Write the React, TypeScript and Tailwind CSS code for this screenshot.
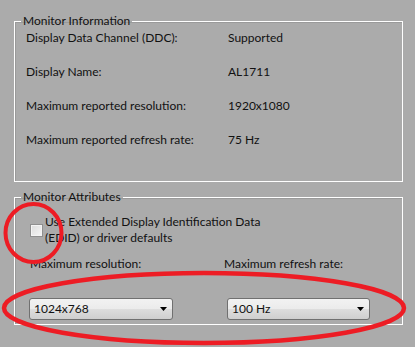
const font = { fontFamily: 'Lato, "Noto Sans", sans-serif' };

function Dropdown({ value, className }: { value: string; className?: string }) {
    return (
        <div className={`h-[22px] flex items-center justify-between rounded-[3px] border border-[#707070] bg-[linear-gradient(#f2f2f2_0%,#ebebeb_50%,#dddddd_51%,#cfcfcf_100%)] pl-[4px] pr-[5px] ${className ?? ''}`}>
            <span className="text-[12px] leading-[16px] text-[#111]">{value}</span>
            <svg width="7" height="4" viewBox="0 0 7 4"><path d="M0 0h7L3.5 4z" fill="#000" /></svg>
        </div>
    );
}

function InfoRow({ label, value }: { label: string; value: string }) {
    return (
        <div className="grid grid-cols-[202px_1fr] leading-[16px]">
            <span>{label}</span>
            <span>{value}</span>
        </div>
    );
}

export default function App() {
    return (
        <div className="relative w-[415px] h-[347px] overflow-hidden bg-[#ababab] pt-[13px] text-[12px] text-[#111]" style={font}>
            <fieldset className="ml-[14px] w-[389px] border border-white px-0 pb-[33px] shadow-[inset_1px_1px_0_#9a9a9a]">
                <legend className="ml-[6px] px-[2px] leading-[16px]">Monitor Information</legend>
                <div className="flex flex-col gap-[18px] pl-[11px] pt-[1px]">
                    <InfoRow label="Display Data Channel (DDC):" value="Supported" />
                    <InfoRow label="Display Name:" value="AL1711" />
                    <InfoRow label="Maximum reported resolution:" value="1920x1080" />
                    <InfoRow label="Maximum reported refresh rate:" value="75 Hz" />
                </div>
            </fieldset>

            <fieldset className="mt-[7px] ml-[14px] w-[389px] border border-white px-0 pb-[4px] shadow-[inset_1px_1px_0_#9a9a9a]">
                <legend className="ml-[6px] px-[2px] leading-[16px]">Monitor Attributes</legend>
                <div className="pl-[15px] pt-[9px]">
                    <label className="flex items-center gap-[2px] leading-[16px]">
                        <span className="w-[13px] h-[13px] shrink-0 border border-[#8f8f8f] bg-[linear-gradient(135deg,#dcdcdc,#f7f7f7)] shadow-[inset_0_0_0_1px_#f4f4f4]" />
                        <span>Use Extended Display Identification Data<br />(EDID) or driver defaults</span>
                    </label>
                    <div className="mt-[10px] grid grid-cols-[194px_1fr] leading-[16px]">
                        <span>Maximum resolution:</span>
                        <span>Maximum refresh rate:</span>
                    </div>
                    <div className="mt-[26px] grid grid-cols-[197px_1fr]">
                        <Dropdown value="1024x768" className="-ml-[1px] w-[144px]" />
                        <Dropdown value="100 Hz" className="w-[143px]" />
                    </div>
                </div>
            </fieldset>

            <svg className="absolute inset-0 pointer-events-none" width="415" height="347" viewBox="0 0 415 347">
                <ellipse cx="33.5" cy="233" rx="28" ry="29" fill="none" stroke="#ed1c24" strokeWidth="4" />
                <ellipse cx="204" cy="308" rx="200" ry="35" fill="none" stroke="#ed1c24" strokeWidth="4.5" />
            </svg>
        </div>
    );
}
